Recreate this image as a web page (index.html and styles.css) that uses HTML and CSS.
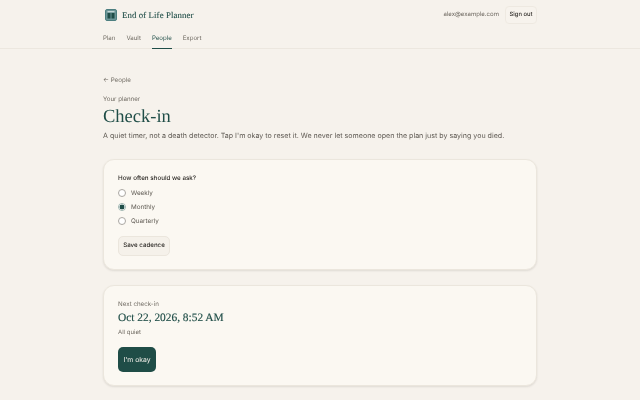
FILE: index.html
```html
<!DOCTYPE html>
<html lang="en">
<head>
<meta charset="utf-8">
<title>Check-in</title>
<link rel="stylesheet" href="styles.css">
</head>
<body>
<header class="site-header">
  <div class="wrap">
    <div class="top-row">
      <a class="brand" href="#">
        <svg class="logo" viewBox="0 0 12 12" width="12" height="12" aria-hidden="true">
          <rect x="0.5" y="0.5" width="11" height="11" rx="1.5" fill="#6d9698" stroke="#4d7f80"/>
          <rect x="2.5" y="4" width="3" height="5.5" fill="#1f4d47"/>
          <rect x="6.5" y="4" width="3" height="5.5" fill="#1f4d47"/>
          <rect x="2.5" y="2.2" width="7" height="1" fill="#d9e6e4"/>
        </svg>
        <span class="brand-name">End of Life Planner</span>
      </a>
      <div class="account">
        <span class="email">alex@example.com</span>
        <button class="btn-small" type="button">Sign out</button>
      </div>
    </div>
    <nav class="nav">
      <a href="#">Plan</a>
      <a href="#">Vault</a>
      <a href="#" class="active">People</a>
      <a href="#">Export</a>
    </nav>
  </div>
</header>
<main class="wrap main">
  <a class="back" href="#">← People</a>
  <p class="eyebrow">Your planner</p>
  <h1>Check-in</h1>
  <p class="lede">A quiet timer, not a death detector. Tap I'm okay to reset it. We never let someone open the plan just by saying you died.</p>
  <section class="card card-form">
    <p class="legend">How often should we ask?</p>
    <div class="options">
      <label class="radio"><input type="radio" name="c"><span>Weekly</span></label>
      <label class="radio"><input type="radio" name="c" checked><span>Monthly</span></label>
      <label class="radio"><input type="radio" name="c"><span>Quarterly</span></label>
    </div>
    <button class="btn-save" type="button">Save cadence</button>
  </section>
  <section class="card card-next">
    <p class="next-label">Next check-in</p>
    <p class="next-date">Oct 22, 2026, 8:52 AM</p>
    <p class="next-status">All quiet</p>
    <button class="btn-primary" type="button">I'm okay</button>
  </section>
</main>
</body>
</html>
```
FILE: styles.css
```css
* { box-sizing: border-box; }
html, body { margin: 0; height: 100%; overflow: hidden; }
body {
  background: #f6f2ec;
  color: #2d2a26;
  font-family: Inter, "Liberation Sans", sans-serif;
  text-rendering: geometricPrecision;
}
p, h1 { margin: 0; }
a { color: inherit; text-decoration: none; }
button { text-rendering: geometricPrecision; }
.site-header, .main { will-change: transform; }
.wrap { width: 434px; margin: 0 auto; }
.site-header { border-bottom: 1px solid #ece7df; height: 49px; }
.top-row {
  height: 29px;
  display: flex;
  align-items: center;
  justify-content: space-between;
}
.brand { display: flex; align-items: center; gap: 5px; margin-left: 2px; }
.logo { display: block; }
.brand-name {
  font-family: "Liberation Serif", serif;
  font-size: 8.8px;
  letter-spacing: 0.1px;
  color: #1f4d47;
  -webkit-text-stroke: 0.1px #1f4d47;
}
.account { display: flex; align-items: center; gap: 6px; }
.email { font-size: 6.05px; color: #6f6a62; }
.btn-small {
  height: 18px;
  width: 32px;
  padding: 0;
  font: 500 5.8px Inter, sans-serif;
  color: #2d2a26;
  background: #f7f3ed;
  border: 1px solid #eee9e1;
  border-radius: 4px;
}
.nav { display: flex; gap: 11px; height: 20px; }
.nav a {
  font-size: 6.1px;
  color: #6f6a62;
  line-height: 20px;
  height: 20px;
}
.nav a.active { color: #1f4d47; border-bottom: 1px solid #1f4d47; }
.main { padding-top: 27px; }
.back { display: block; font-size: 6.2px; color: #6f6a62; line-height: 10px; }
.eyebrow { font-size: 6.2px; color: #6f6a62; line-height: 10px; margin-top: 9px; }
h1 {
  font-family: "Liberation Serif", serif;
  font-weight: 400;
  font-size: 18.5px;
  line-height: 22px;
  color: #1f4d47;
  margin-top: 1px;
}
.lede { font-size: 7.1px; color: #5f5a53; line-height: 12px; margin-top: 2px; white-space: nowrap; }
.card {
  background: #fbf8f2;
  border: 1px solid #ebe6dd;
  border-radius: 11px;
  box-shadow: 0 1px 2px rgba(60, 50, 40, 0.12);
  padding: 14px;
}
.card-form { margin-top: 17px; height: 111px; padding-top: 13px; }
.card-next { margin-top: 15px; height: 101px; padding-top: 14px; }
.legend { font-size: 6.25px; font-weight: 500; line-height: 10px; color: #2d2a26; }
.options { margin-top: 3px; }
.radio {
  display: flex;
  align-items: center;
  gap: 5px;
  height: 14.2px;
  font-size: 6.3px;
  color: #5f5a53;
}
.radio input {
  appearance: none;
  width: 8px;
  height: 8px;
  margin: 0;
  border: 1px solid #aaa7a2;
  border-radius: 50%;
  background: #fff;
}
.radio input:checked {
  border-color: #9db5b0;
  background: radial-gradient(circle, #1f4d47 0 2.2px, #fff 2.7px);
}
.btn-save {
  display: block;
  margin-top: 7px;
  height: 20px;
  width: 52px;
  padding: 0;
  font: 500 6.2px Inter, sans-serif;
  color: #2d2a26;
  background: #f5f1ea;
  border: 1px solid #ebe6dd;
  border-radius: 5px;
}
.next-label { font-size: 6.2px; color: #6f6a62; line-height: 10px; }
.next-date {
  font-family: "Liberation Serif", serif;
  font-size: 11.4px;
  line-height: 17px;
  color: #1f4d47;
  -webkit-text-stroke: 0.15px #1f4d47;
}
.next-status { font-size: 6px; color: #6f6a62; line-height: 10px; margin-top: 1px; }
.btn-primary {
  display: block;
  margin-top: 9px;
  height: 25px;
  width: 38px;
  padding: 0;
  font: 400 6.8px Inter, sans-serif;
  color: #f6f2ec;
  background: #1f4d47;
  border: 0;
  border-radius: 5px;
}
```
